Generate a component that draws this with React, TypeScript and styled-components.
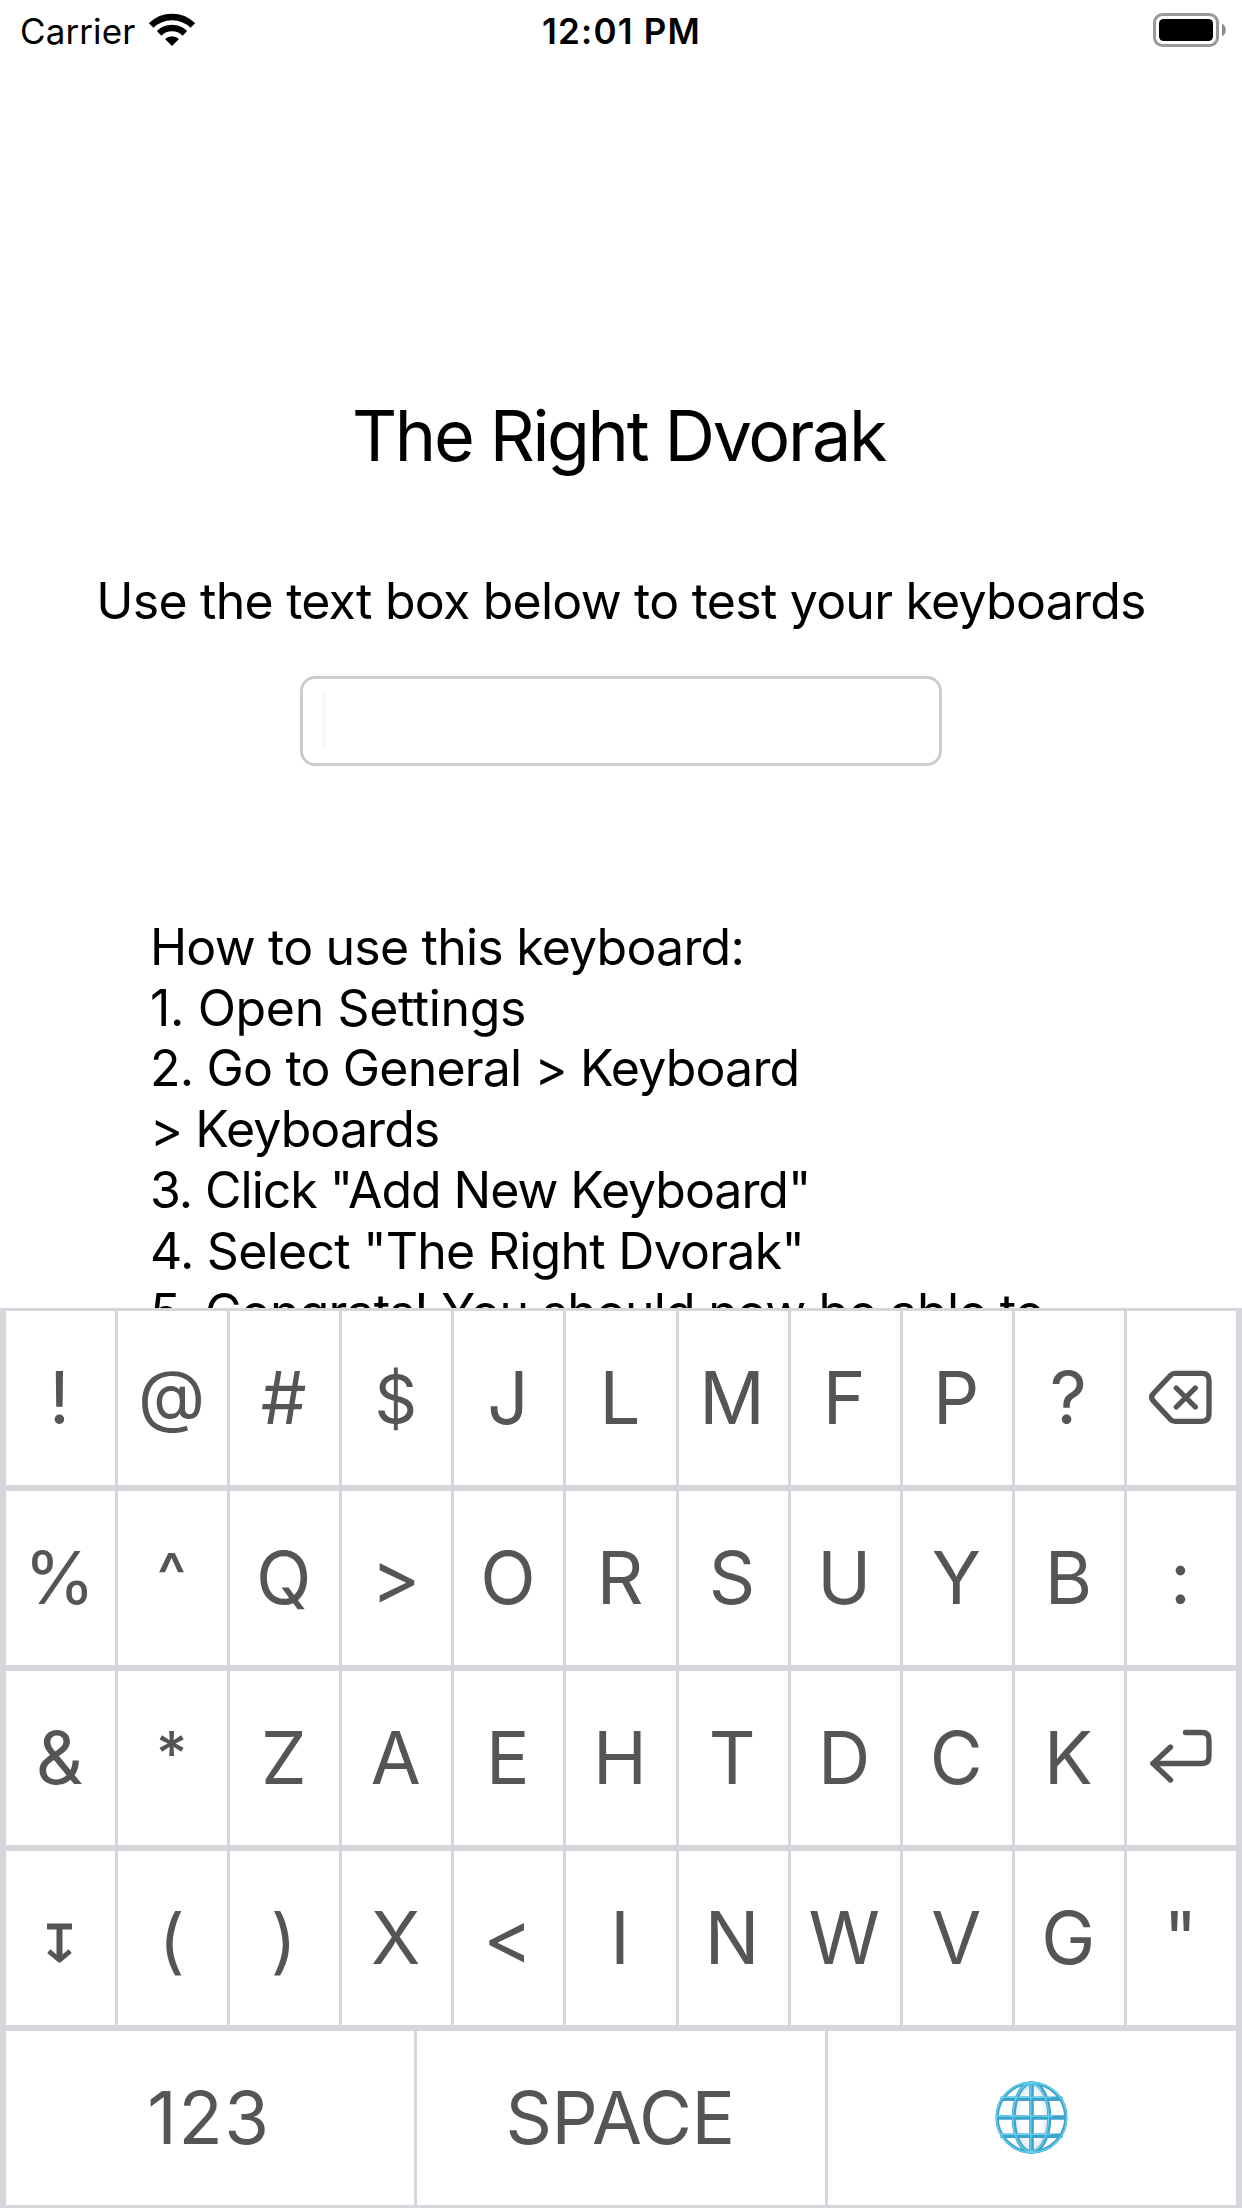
import React from 'react';
import styled, { createGlobalStyle } from 'styled-components';

const GlobalStyle = createGlobalStyle`
  * { box-sizing: border-box; }
  body { margin: 0; background: #fff; }
`;

const line = '#d6d7dd';
const ink = '#555';

const Screen = styled.div`
  display: flex;
  flex-direction: column;
  width: 1242px;
  height: 2208px;
  overflow: hidden;
  background: #fff;
  color: #000;
  font-family: Inter, 'Liberation Sans', sans-serif;
`;

const Page = styled.main`
  display: flex;
  flex-direction: column;
  align-items: center;
  height: 1308px;
  overflow: hidden;
`;

const StatusBar = styled.header`
  display: grid;
  grid-template-columns: 1fr auto 1fr;
  width: 100%;
  height: 60px;
  flex: none;
  padding: 10px 16px 0 20px;
  font-size: 35px;
  line-height: 42px;
`;

const Carrier = styled.div`
  display: flex;
  gap: 14px;
  letter-spacing: 0.1px;
`;

const WifiIcon = styled.svg`
  width: 46px;
  height: 34px;
  margin-top: 3px;
`;

const Clock = styled.div`
  font-weight: 600;
  letter-spacing: 1.2px;
  padding-right: 3px;
`;

const BatteryIcon = styled.svg`
  justify-self: end;
  width: 73px;
  height: 34px;
  margin-top: 3px;
`;

const Title = styled.h1`
  margin: 333px 0 0;
  padding-right: 5px;
  font-size: 70px;
  font-weight: 400;
  line-height: 85px;
  letter-spacing: -2.35px;
`;

const Hint = styled.p`
  margin: 93px 0 45px;
  font-size: 50px;
  line-height: 60px;
  letter-spacing: -0.76px;
  white-space: nowrap;
`;

const Field = styled.div`
  display: flex;
  align-items: center;
  flex: none;
  width: 642px;
  height: 90px;
  padding-left: 19px;
  border: 3px solid #ccc;
  border-radius: 15px;
`;

const Caret = styled.span`
  width: 4px;
  height: 56px;
  margin-bottom: 2px;
  background: #f7f7ff;
`;

const Steps = styled.div`
  width: 942px;
  margin-top: 150.9px;
  font-size: 50px;
  line-height: 60.8px;
`;

const Step = styled.div<{ $spacing: number }>`
  letter-spacing: ${(p) => p.$spacing}px;
  white-space: nowrap;
`;

const Keyboard = styled.section`
  display: flex;
  flex-direction: column;
  gap: 6px;
  flex: none;
  height: 900px;
  padding: 3px 6px;
  background: ${line};
`;

const Row = styled.div<{ $keys: number }>`
  display: grid;
  grid-template-columns: repeat(${(p) => p.$keys}, minmax(0, 1fr));
  gap: 3px;
  height: 174px;
`;

const Key = styled.div<{ $icon?: boolean }>`
  display: flex;
  align-items: center;
  justify-content: center;
  padding-right: ${(p) => (p.$icon ? 0 : 2)}px;
  background: #fff;
  color: ${ink};
  font-size: 72.5px;
  line-height: 86px;
`;

const Glyph = styled.span<{ $size?: number; $rise?: number; $spacing?: number; $weight?: number }>`
  font-size: ${(p) => p.$size ?? 72.5}px;
  font-weight: ${(p) => p.$weight ?? 400};
  letter-spacing: ${(p) => p.$spacing ?? 0}px;
  transform: translateY(${(p) => -(p.$rise ?? 0)}px);
`;

const KeyIcon = styled.svg`
  flex: none;
  width: 109px;
  height: 174px;
  fill: none;
  stroke: ${ink};
  stroke-width: 5.3;
  stroke-linecap: round;
  stroke-linejoin: round;
`;

const GlobeIcon = styled.svg`
  width: 80px;
  height: 80px;
  fill: none;
`;

const Delete = () => (
  <KeyIcon viewBox="0 0 109 174">
    <path d="M48 62.3H75Q82 62.3 82 69.3V103.3Q82 110.3 75 110.3H48Q45.3 110.3 43.3 108.3L26 89.6Q23.2 86.3 26 83L43.3 64.5Q45.3 62.3 48 62.3Z" />
    <path d="M49.3 77L68.3 96M68.3 77L49.3 96" />
  </KeyIcon>
);

const Return = () => (
  <KeyIcon viewBox="0 0 109 174">
    <path d="M58.5 61.5H75Q82 61.5 82 68.5V85.5Q82 92.5 75 92.5H26" />
    <path d="M43.5 76L26 92.5L43.5 109" />
  </KeyIcon>
);

const Shift = () => (
  <KeyIcon viewBox="0 0 109 174">
    <g strokeLinecap="butt" strokeWidth="6">
      <path d="M41 75.5H66M53.5 75.5V109" />
      <path d="M42.8 100.2L53.5 109.2L64.2 100.2" strokeWidth="4.8" />
    </g>
  </KeyIcon>
);

const Globe = () => (
  <GlobeIcon viewBox="0 0 80 80">
    <defs>
      <radialGradient id="shade">
        <stop offset="0.6" stopColor="#fff" />
        <stop offset="1" stopColor="#dfe7f1" />
      </radialGradient>
    </defs>
    <ellipse cx="39.5" cy="39.5" rx="17" ry="34" fill="url(#shade)" />
    <g stroke="#3fa2c8" strokeWidth="3.4">
      <circle cx="39.5" cy="39.5" r="34.4" />
      <ellipse cx="39.5" cy="39.5" rx="17.8" ry="34.4" strokeWidth="4" />
      <path d="M39.5 4V75M8.5 20.8H70.5M4 39.5H75M8.5 57.8H70.5" strokeWidth="4.6" />
    </g>
    <g stroke="#62d0ef" strokeWidth="1.3" transform="translate(-0.7 -1)">
      <circle cx="40.2" cy="40.5" r="35" />
      <ellipse cx="39.5" cy="40.5" rx="17.8" ry="34" />
      <path d="M39.5 6V75M9.5 20.3H60M6 39H62M9.5 57.3H60" />
    </g>
  </GlobeIcon>
);

const steps: [string, number][] = [
  ['How to use this keyboard:', -0.79],
  ['1. Open Settings', -0.36],
  ['2. Go to General > Keyboard', -0.82],
  ['> Keyboards', -0.92],
  ['3. Click "Add New Keyboard"', -1.04],
  ['4. Select "The Right Dvorak"', -0.74],
  ['5. Congrats! You should now be able to', -0.82],
];

const rows = [
  ['!', '@', '#', '$', 'J', 'L', 'M', 'F', 'P', '?', 'delete'],
  ['%', '^', 'Q', '>', 'O', 'R', 'S', 'U', 'Y', 'B', ':'],
  ['&', '*', 'Z', 'A', 'E', 'H', 'T', 'D', 'C', 'K', 'return'],
  ['shift', '(', ')', 'X', '<', 'I', 'N', 'W', 'V', 'G', '"'],
];

const icons: Record<string, React.ReactElement> = {
  delete: <Delete />,
  return: <Return />,
  shift: <Shift />,
};

/* Symbols whose size, height or weight differs from the letters. */
const tuning: Record<string, { $size: number; $rise: number; $weight?: number }> = {
  '@': { $size: 69.5, $rise: 3.3 },
  $: { $size: 66.5, $rise: -0.7 },
  '^': { $size: 62, $rise: 3.3, $weight: 500 },
  '*': { $size: 61, $rise: 4.8, $weight: 500 },
  '(': { $size: 71, $rise: -2 },
  ')': { $size: 71, $rise: -2 },
  '>': { $size: 75, $rise: 0.6 },
  '<': { $size: 75, $rise: 0.6 },
  '&': { $size: 73.5, $rise: 0 },
};

export default function App() {
  return (
    <Screen>
      <GlobalStyle />
      <Page>
        <StatusBar>
          <Carrier>
            Carrier
            <WifiIcon viewBox="0 0 46 34" fill="none" stroke="#000" strokeWidth="6.5">
              <path d="M2.2 12.5A29.7 29.7 0 0 1 43.8 12.5" />
              <path d="M10.1 20.3A18.5 18.5 0 0 1 35.9 20.3" />
              <path d="M23 33L16 26A10 10 0 0 1 30 26Z" fill="#000" stroke="none" />
            </WifiIcon>
          </Carrier>
          <Clock>12:01 PM</Clock>
          <BatteryIcon viewBox="0 0 73 34">
            <rect x="1.5" y="1.5" width="63" height="31" rx="8" fill="none" stroke="#999" strokeWidth="3" />
            <rect x="6" y="6" width="54" height="22" rx="4.5" fill="#000" />
            <path d="M69 10.7C74 13 74 21 69 23.3Z" fill="#8c8c8c" />
          </BatteryIcon>
        </StatusBar>
        <Title>The Right Dvorak</Title>
        <Hint>Use the text box below to test your keyboards</Hint>
        <Field>
          <Caret />
        </Field>
        <Steps>
          {steps.map(([text, spacing]) => (
            <Step key={text} $spacing={spacing}>
              {text}
            </Step>
          ))}
        </Steps>
      </Page>
      <Keyboard>
        {rows.map((row) => (
          <Row key={row[0]} $keys={11}>
            {row.map((k) => (
              <Key key={k} $icon={k in icons}>
                {icons[k] ?? <Glyph {...tuning[k]}>{k}</Glyph>}
              </Key>
            ))}
          </Row>
        ))}
        <Row $keys={3}>
          <Key>
            <Glyph $spacing={1.6}>123</Glyph>
          </Key>
          <Key>
            <Glyph $spacing={-0.5}>SPACE</Glyph>
          </Key>
          <Key $icon>
            <Globe />
          </Key>
        </Row>
      </Keyboard>
    </Screen>
  );
}
